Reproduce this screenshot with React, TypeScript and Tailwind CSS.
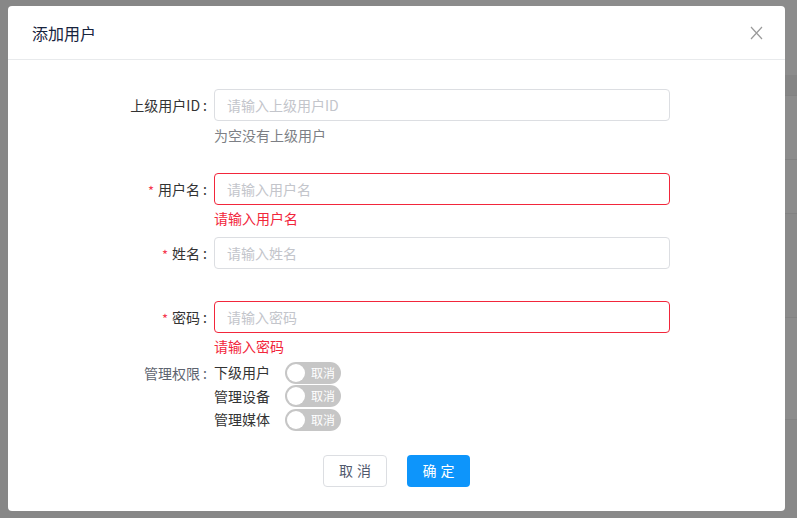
import { useState } from "react";

const FONT = { fontFamily: '"Noto Sans CJK SC", "Noto Sans", "Liberation Sans", sans-serif' };

function Label({ text, required, muted }: { text: string; required?: boolean; muted?: boolean }) {
  return (
    <div className={`w-[199px] shrink-0 h-[32px] flex items-center justify-end text-[14px] ${muted ? "text-[#5e6470]" : "text-[#333]"}`}>
      {required && <span className="text-[#f5394f] text-[13px] mr-[4px] mt-[3px]">*</span>}
      <span>{text}</span>
      <span className="ml-[3px]">:</span>
    </div>
  );
}

function TextField({ placeholder, error }: { placeholder: string; error?: boolean }) {
  return (
    <input
      placeholder={placeholder}
      className={`w-[456px] h-[32px] rounded-[4px] border px-[12px] text-[14px] outline-none bg-white placeholder:text-[#c3c5cb] ${
        error ? "border-[#f2263b]" : "border-[#dcdee2]"
      }`}
      style={FONT}
    />
  );
}

function Toggle() {
  const [on, setOn] = useState(false);
  return (
    <button
      onClick={() => setOn(!on)}
      className={`relative w-[56px] h-[22px] rounded-full flex items-center ${on ? "bg-[#0d95fb]" : "bg-[#c6c6c6]"}`}
    >
      <span className={`absolute top-[2px] w-[18px] h-[18px] rounded-full bg-white ${on ? "left-[36px]" : "left-[2px]"}`} />
      <span className={`absolute text-[12px] text-white leading-none ${on ? "left-[9px]" : "left-[26px]"}`}>
        {on ? "确定" : "取消"}
      </span>
    </button>
  );
}

const PERMS = ["下级用户", "管理设备", "管理媒体"];

export default function App() {
  return (
    <div className="relative w-[797px] h-[518px] overflow-hidden bg-[#878787]" style={FONT}>
      {/* page underneath the mask */}
      <div className="ml-[400px] flex flex-col bg-[#8c8c8c] h-full">
        <div className="h-[75px]" />
        <div className="h-[21px] bg-[#858585] border-b border-[#828282]" />
        <div className="h-[64px] border-b border-[#828282]" />
        <div className="h-[54px] border-b border-[#828282]" />
        <div className="h-[104px] border-b border-[#838383] bg-[#8a8a8a]" />
        <div className="h-[102px] border-b border-[#838383]" />
        <div className="flex-1 bg-[#898989]" />
      </div>

      {/* modal */}
      <div className="absolute left-[8px] top-[6px] w-[777px] h-[505px] bg-white rounded-[4px] flex flex-col">
        <div className="h-[54px] shrink-0 border-b border-[#e8eaec] flex items-center justify-between pl-[24px] pr-[22px]">
          <span className="text-[16px] font-normal text-[#17233d]">添加用户</span>
          <svg width="13" height="14" viewBox="0 0 13 14" className="mt-[1px]">
            <path d="M1 1 L12 13 M12 1 L1 13" stroke="#9a9a9a" strokeWidth="1.2" fill="none" />
          </svg>
        </div>

        <div className="pt-[29px] flex flex-col">
          <div className="flex gap-[7px]">
            <Label text="上级用户ID" />
            <div className="flex flex-col">
              <TextField placeholder="请输入上级用户ID" />
              <div className="h-[52px] pt-[4px] text-[14px] leading-[20px] text-[#7d7f85]">为空没有上级用户</div>
            </div>
          </div>

          <div className="flex gap-[7px]">
            <Label text="用户名" required />
            <div className="flex flex-col">
              <TextField placeholder="请输入用户名" error />
              <div className="h-[32px] pt-[4px] text-[14px] leading-[18px] text-[#f2263b]">请输入用户名</div>
            </div>
          </div>

          <div className="flex gap-[7px]">
            <Label text="姓名" required />
            <div className="flex flex-col">
              <TextField placeholder="请输入姓名" />
              <div className="h-[32px]" />
            </div>
          </div>

          <div className="flex gap-[7px]">
            <Label text="密码" required />
            <div className="flex flex-col">
              <TextField placeholder="请输入密码" error />
              <div className="h-[28px] pt-[4px] text-[14px] leading-[18px] text-[#f2263b]">请输入密码</div>
            </div>
          </div>

          <div className="flex gap-[7px]">
            <div className="w-[199px] shrink-0 h-[24px] flex items-center justify-end text-[14px] text-[#5e6470]">
              <span>管理权限</span>
              <span className="ml-[3px]">:</span>
            </div>
            <div className="flex flex-col">
              {PERMS.map((p) => (
                <div key={p} className="h-[23.5px] flex items-center gap-[15px]">
                  <span className="w-[56px] text-[14px] text-[#333]">{p}</span>
                  <Toggle />
                </div>
              ))}
            </div>
          </div>

          <div className="mt-[23px] flex justify-center gap-[20px]">
            <button className="w-[64px] h-[32px] rounded-[4px] border border-[#dcdee2] text-[14px] text-[#515a6e] tracking-[4px] pl-[4px] bg-white">
              取消
            </button>
            <button className="w-[63px] h-[32px] rounded-[4px] bg-[#0d95fb] text-[14px] text-white tracking-[4px] pl-[4px]">
              确定
            </button>
          </div>
        </div>
      </div>
    </div>
  );
}
